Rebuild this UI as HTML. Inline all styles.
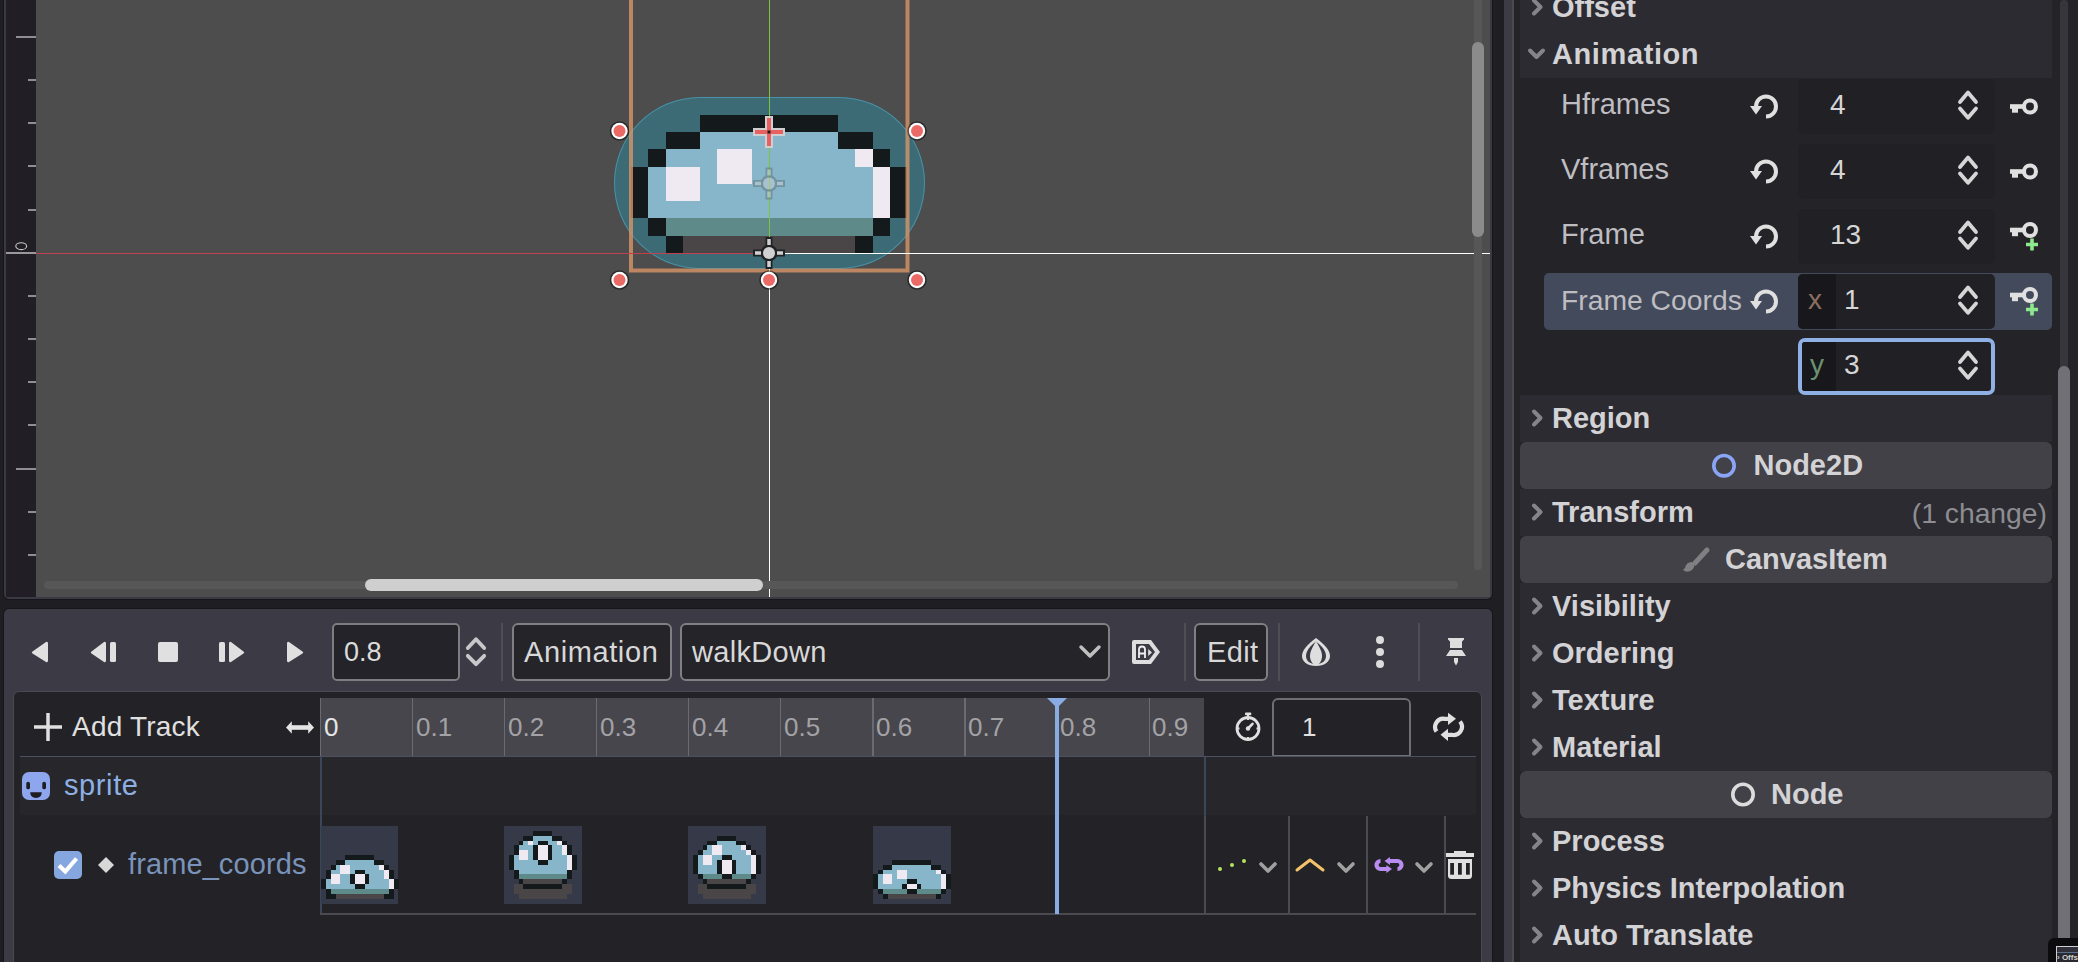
<!DOCTYPE html>
<html><head><meta charset="utf-8">
<style>
html,body{margin:0;padding:0;}
body{width:2078px;height:962px;overflow:hidden;position:relative;background:#1f1e23;font-family:"Liberation Sans",sans-serif;}
.a{position:absolute;}
.t{position:absolute;white-space:nowrap;line-height:1;}
svg{position:absolute;overflow:visible;}
</style></head><body>

<div class="a" style="left:4px;top:-10px;width:1488px;height:609px;background:#3a3944;border-radius:0 0 5px 5px;box-shadow:0 0 0 1px #17161b;"></div>
<div class="a" style="left:6px;top:0px;width:30px;height:597px;background:#211f25;"></div>
<div class="a" style="left:36px;top:0px;width:1454px;height:597px;background:#4d4d4d;"></div>
<div class="a" style="left:16px;top:36px;width:20px;height:2px;background:#8f8e93;"></div>
<div class="a" style="left:28px;top:79px;width:8px;height:2px;background:#8f8e93;"></div>
<div class="a" style="left:28px;top:122px;width:8px;height:2px;background:#8f8e93;"></div>
<div class="a" style="left:28px;top:165px;width:8px;height:2px;background:#8f8e93;"></div>
<div class="a" style="left:28px;top:209px;width:8px;height:2px;background:#8f8e93;"></div>
<div class="a" style="left:6px;top:252px;width:30px;height:2px;background:#99989d;"></div>
<div class="a" style="left:28px;top:295px;width:8px;height:2px;background:#8f8e93;"></div>
<div class="a" style="left:28px;top:338px;width:8px;height:2px;background:#8f8e93;"></div>
<div class="a" style="left:28px;top:381px;width:8px;height:2px;background:#8f8e93;"></div>
<div class="a" style="left:28px;top:424px;width:8px;height:2px;background:#8f8e93;"></div>
<div class="a" style="left:16px;top:468px;width:20px;height:2px;background:#8f8e93;"></div>
<div class="a" style="left:28px;top:511px;width:8px;height:2px;background:#8f8e93;"></div>
<div class="a" style="left:28px;top:554px;width:8px;height:2px;background:#8f8e93;"></div>
<svg style="left:15px;top:242px" width="13" height="9"><ellipse cx="6.2" cy="4.2" rx="5.4" ry="3.4" fill="none" stroke="#c8c8c8" stroke-width="1.1"/></svg>
<div class="a" style="left:613.5px;top:97px;width:311px;height:172px;background:#3d6b75;border-radius:86px;box-shadow:0 0 0 1px rgba(80,170,200,0.6) inset;"></div>
<svg style="left:630.5px;top:-6.5px" width="276" height="276" viewBox="0 0 16 16" shape-rendering="crispEdges"><rect x="4" y="7" width="8" height="1" fill="#141a1b"/><rect x="2" y="8" width="2" height="1" fill="#141a1b"/><rect x="4" y="8" width="8" height="1" fill="#87b5c9"/><rect x="12" y="8" width="2" height="1" fill="#141a1b"/><rect x="1" y="9" width="1" height="1" fill="#141a1b"/><rect x="2" y="9" width="3" height="1" fill="#87b5c9"/><rect x="5" y="9" width="2" height="1" fill="#efe9f1"/><rect x="7" y="9" width="6" height="1" fill="#87b5c9"/><rect x="13" y="9" width="1" height="1" fill="#efe9f1"/><rect x="14" y="9" width="1" height="1" fill="#141a1b"/><rect x="0" y="10" width="1" height="1" fill="#141a1b"/><rect x="1" y="10" width="1" height="1" fill="#87b5c9"/><rect x="2" y="10" width="2" height="1" fill="#efe9f1"/><rect x="4" y="10" width="1" height="1" fill="#87b5c9"/><rect x="5" y="10" width="2" height="1" fill="#efe9f1"/><rect x="7" y="10" width="7" height="1" fill="#87b5c9"/><rect x="14" y="10" width="1" height="1" fill="#efe9f1"/><rect x="15" y="10" width="1" height="1" fill="#141a1b"/><rect x="0" y="11" width="1" height="1" fill="#141a1b"/><rect x="1" y="11" width="1" height="1" fill="#87b5c9"/><rect x="2" y="11" width="2" height="1" fill="#efe9f1"/><rect x="4" y="11" width="10" height="1" fill="#87b5c9"/><rect x="14" y="11" width="1" height="1" fill="#efe9f1"/><rect x="15" y="11" width="1" height="1" fill="#141a1b"/><rect x="0" y="12" width="1" height="1" fill="#141a1b"/><rect x="1" y="12" width="13" height="1" fill="#87b5c9"/><rect x="14" y="12" width="1" height="1" fill="#efe9f1"/><rect x="15" y="12" width="1" height="1" fill="#141a1b"/><rect x="1" y="13" width="1" height="1" fill="#141a1b"/><rect x="2" y="13" width="12" height="1" fill="#5f8a8a"/><rect x="14" y="13" width="1" height="1" fill="#141a1b"/><rect x="2" y="14" width="1" height="1" fill="#141a1b"/><rect x="3" y="14" width="10" height="1" fill="#4a4547"/><rect x="13" y="14" width="1" height="1" fill="#141a1b"/></svg>
<svg style="left:0;top:0" width="1490" height="597"><path d="M631 -5 V270.5 H907.5 V-5" fill="none" stroke="rgba(220,150,104,0.78)" stroke-width="4"/></svg>
<div class="a" style="left:36px;top:253px;width:733px;height:1px;background:#c0404f;"></div>
<div class="a" style="left:769px;top:253px;width:721px;height:1px;background:#ffffff;"></div>
<div class="a" style="left:769px;top:0px;width:1px;height:253px;background:#7cc43f;"></div>
<div class="a" style="left:769px;top:253px;width:1px;height:344px;background:#ffffff;"></div>
<svg style="left:0;top:0" width="1490" height="597">
<g stroke="#cfcfcf" stroke-width="8" stroke-linecap="butt"><line x1="769" y1="116" x2="769" y2="148"/><line x1="753" y1="132" x2="785" y2="132"/></g>
<g stroke="#e8605f" stroke-width="4"><line x1="769" y1="118" x2="769" y2="146"/><line x1="755" y1="132" x2="783" y2="132"/></g>
<rect x="767.5" y="130.5" width="3" height="3" fill="#1a1a1a"/>
</svg>
<svg style="left:0;top:0" width="1490" height="597"><g opacity="0.45"><g stroke="#5a6a70" stroke-width="7"><line x1="769" y1="167.5" x2="769" y2="199.5"/><line x1="753" y1="183.5" x2="785" y2="183.5"/></g>
<circle cx="769" cy="183.5" r="8.5" fill="#5a6a70"/>
<g stroke="#d0d0d0" stroke-width="3.5"><line x1="769" y1="169.5" x2="769" y2="175.5"/><line x1="769" y1="191.5" x2="769" y2="197.5"/><line x1="755" y1="183.5" x2="761" y2="183.5"/><line x1="777" y1="183.5" x2="783" y2="183.5"/></g>
<circle cx="769" cy="183.5" r="6" fill="#d0d0d0"/></g><g opacity="1"><g stroke="#202325" stroke-width="7"><line x1="769" y1="237" x2="769" y2="269"/><line x1="753" y1="253" x2="785" y2="253"/></g>
<circle cx="769" cy="253" r="8.5" fill="#202325"/>
<g stroke="#d0d0d0" stroke-width="3.5"><line x1="769" y1="239" x2="769" y2="245"/><line x1="769" y1="261" x2="769" y2="267"/><line x1="755" y1="253" x2="761" y2="253"/><line x1="777" y1="253" x2="783" y2="253"/></g>
<circle cx="769" cy="253" r="6" fill="#d0d0d0"/></g></svg>
<svg style="left:0;top:0" width="1490" height="597"><circle cx="619.5" cy="131" r="9.8" fill="rgba(0,0,0,0.45)"/><circle cx="619.5" cy="131" r="8.2" fill="#ffffff"/><circle cx="619.5" cy="131" r="6" fill="#ec6a66"/><circle cx="917" cy="131" r="9.8" fill="rgba(0,0,0,0.45)"/><circle cx="917" cy="131" r="8.2" fill="#ffffff"/><circle cx="917" cy="131" r="6" fill="#ec6a66"/><circle cx="619.5" cy="280" r="9.8" fill="rgba(0,0,0,0.45)"/><circle cx="619.5" cy="280" r="8.2" fill="#ffffff"/><circle cx="619.5" cy="280" r="6" fill="#ec6a66"/><circle cx="769" cy="280" r="9.8" fill="rgba(0,0,0,0.45)"/><circle cx="769" cy="280" r="8.2" fill="#ffffff"/><circle cx="769" cy="280" r="6" fill="#ec6a66"/><circle cx="917" cy="280" r="9.8" fill="rgba(0,0,0,0.45)"/><circle cx="917" cy="280" r="8.2" fill="#ffffff"/><circle cx="917" cy="280" r="6" fill="#ec6a66"/></svg>
<div class="a" style="left:1474px;top:0px;width:8px;height:570px;background:#575757;border-radius:0 0 4px 4px;"></div>
<div class="a" style="left:1472px;top:42px;width:12px;height:195px;background:#8b8b8b;border-radius:6px;"></div>
<div class="a" style="left:44px;top:581px;width:1414px;height:8px;background:#575757;border-radius:4px;"></div>
<div class="a" style="left:365px;top:579px;width:398px;height:12px;background:#cfcfcf;border-radius:6px;"></div>
<div class="a" style="left:4px;top:609px;width:1488px;height:400px;background:#3c3a44;border-radius:5px 5px 0 0;box-shadow:0 0 0 1px #17161b;"></div>
<svg style="left:0;top:0" width="1500" height="962">
<path d="M48 643.5 L48 660.5 Q48 663 46 662 L32.5 653.5 Q31 652.5 32.5 651.5 L46 642 Q48 641 48 643.5Z" fill="#e0e0e0"/>
<path d="M106 643.5 L106 660.5 Q106 663 104 662 L91.5 653.5 Q90 652.5 91.5 651.5 L104 642 Q106 641 106 643.5Z" fill="#e0e0e0"/>
<rect x="110" y="642" width="6" height="20" rx="1.5" fill="#e0e0e0"/>
<rect x="158" y="642" width="20" height="20" rx="2" fill="#e0e0e0"/>
<rect x="219" y="642" width="6" height="20" rx="1.5" fill="#e0e0e0"/>
<path d="M229 643.5 L229 660.5 Q229 663 231 662 L243.5 653.5 Q245 652.5 243.5 651.5 L231 642 Q229 641 229 643.5Z" fill="#e0e0e0"/>
<path d="M287 643.5 L287 660.5 Q287 663 289 662 L302.5 653.5 Q304 652.5 302.5 651.5 L289 642 Q287 641 287 643.5Z" fill="#e0e0e0"/>
<path d="M467.8 648 L476 639.2 L484.2 648 M467.8 655.8 L476 664.2 L484.2 655.8" fill="none" stroke="#c8c8cb" stroke-width="3.8" stroke-linecap="round" stroke-linejoin="round"/>
</svg>
<div class="a" style="left:332px;top:623px;width:128px;height:58px;background:#242329;border:2px solid #7d7c80;border-radius:5px;box-sizing:border-box;"></div>
<div class="t" style="left:344px;top:638.8275px;font-size:27px;color:#dcdcdc;font-weight:normal;">0.8</div>
<div class="a" style="left:501px;top:623px;width:2px;height:58px;background:#4f4e57;"></div>
<div class="a" style="left:1184px;top:623px;width:2px;height:58px;background:#4f4e57;"></div>
<div class="a" style="left:1278px;top:623px;width:2px;height:58px;background:#4f4e57;"></div>
<div class="a" style="left:1418px;top:623px;width:2px;height:58px;background:#4f4e57;"></div>
<div class="a" style="left:512px;top:623px;width:160px;height:58px;background:#252429;border:2px solid #807f84;border-radius:6px;box-sizing:border-box;"></div>
<div class="t" style="left:524px;top:638.4515px;font-size:29px;color:#d8d8d8;font-weight:normal;letter-spacing:0.6px;">Animation</div>
<div class="a" style="left:680px;top:623px;width:430px;height:58px;background:#252429;border:2px solid #807f84;border-radius:6px;box-sizing:border-box;"></div>
<div class="t" style="left:692px;top:638.4515px;font-size:29px;color:#d8d8d8;font-weight:normal;letter-spacing:0.3px;">walkDown</div>
<svg style="left:0;top:0" width="1500" height="962">
<path d="M1081 647 L1090 656 L1099 647" fill="none" stroke="#c0c0c0" stroke-width="3.5" stroke-linecap="round" stroke-linejoin="round"/>
<path fill-rule="evenodd" d="M1134 640 H1151 L1160 652 L1151 664 H1134 Q1132 664 1132 662 V642 Q1132 640 1134 640Z M1136 644 V660 H1149 L1155 652 L1149 644Z" fill="#dedede"/>
<path d="M1139 658 V649.5 A3 3 0 0 1 1145 649.5 V658 M1139 653.5 H1145" fill="none" stroke="#f0f0f0" stroke-width="1.8"/>
<path d="M1148.2 649 L1152 652.5 L1148.2 656Z" fill="#dedede"/>
</svg>
<div class="a" style="left:1194px;top:623px;width:74px;height:58px;background:#252429;border:2px solid #807f84;border-radius:6px;box-sizing:border-box;"></div>
<div class="t" style="left:1207px;top:637.9515px;font-size:29px;color:#d8d8d8;font-weight:normal;letter-spacing:0.4px;">Edit</div>
<svg style="left:0;top:0" width="1500" height="962">
<path d="M1316 638 C1308 644 1302 650 1302 656 C1302 662 1308 666 1316 666 C1324 666 1330 662 1330 656 C1330 650 1324 644 1316 638Z" fill="#dedede"/>
<path d="M1316 641.5 C1310 646 1306 651 1306 656 C1306 661 1310 664 1316 664 C1322 664 1326 661 1326 656 C1326 651 1322 646 1316 641.5Z" fill="#3c3a44"/>
<path d="M1316 641 C1312 648 1310 652 1310 656 C1310 661 1313 665 1316 665 C1319 665 1322 661 1322 656 C1322 652 1320 648 1316 641Z" fill="#dedede"/>
<circle cx="1380" cy="640" r="4" fill="#dcdcdc"/><circle cx="1380" cy="652" r="4" fill="#dcdcdc"/><circle cx="1380" cy="664" r="4" fill="#dcdcdc"/>
<path d="M1448 638 H1464 V639.5 L1462 641.5 V648 H1450 V641.5 L1448 639.5Z" fill="#dedede"/>
<path d="M1450 650 H1462 L1466 656 H1446Z" fill="#dedede"/>
<path d="M1454 658 H1458 V662 L1456 665.5 L1454 662Z" fill="#dedede"/>
</svg>
<div class="a" style="left:13px;top:691px;width:1469px;height:300px;background:#232227;border:1px solid #4a4951;border-radius:6px;box-sizing:border-box;"></div>
<div class="a" style="left:320px;top:698px;width:884px;height:58px;background:#47464c;"></div>
<div class="a" style="left:319.6px;top:698px;width:1.4px;height:58px;background:#6b6a70;"></div>
<div class="t" style="left:324px;top:713.991px;font-size:26px;color:#e6e6e6;font-weight:normal;">0</div>
<div class="a" style="left:411.7px;top:698px;width:1.4px;height:58px;background:#6b6a70;"></div>
<div class="t" style="left:416px;top:713.991px;font-size:26px;color:#a3a2a6;font-weight:normal;">0.1</div>
<div class="a" style="left:503.8px;top:698px;width:1.4px;height:58px;background:#6b6a70;"></div>
<div class="t" style="left:508px;top:713.991px;font-size:26px;color:#a3a2a6;font-weight:normal;">0.2</div>
<div class="a" style="left:595.9px;top:698px;width:1.4px;height:58px;background:#6b6a70;"></div>
<div class="t" style="left:600px;top:713.991px;font-size:26px;color:#a3a2a6;font-weight:normal;">0.3</div>
<div class="a" style="left:688.0px;top:698px;width:1.4px;height:58px;background:#6b6a70;"></div>
<div class="t" style="left:692px;top:713.991px;font-size:26px;color:#a3a2a6;font-weight:normal;">0.4</div>
<div class="a" style="left:780.1px;top:698px;width:1.4px;height:58px;background:#6b6a70;"></div>
<div class="t" style="left:784px;top:713.991px;font-size:26px;color:#a3a2a6;font-weight:normal;">0.5</div>
<div class="a" style="left:872.2px;top:698px;width:1.4px;height:58px;background:#6b6a70;"></div>
<div class="t" style="left:876px;top:713.991px;font-size:26px;color:#a3a2a6;font-weight:normal;">0.6</div>
<div class="a" style="left:964.3px;top:698px;width:1.4px;height:58px;background:#6b6a70;"></div>
<div class="t" style="left:968px;top:713.991px;font-size:26px;color:#a3a2a6;font-weight:normal;">0.7</div>
<div class="a" style="left:1056.4px;top:698px;width:1.4px;height:58px;background:#6b6a70;"></div>
<div class="t" style="left:1060px;top:713.991px;font-size:26px;color:#a3a2a6;font-weight:normal;">0.8</div>
<div class="a" style="left:1148.5px;top:698px;width:1.4px;height:58px;background:#6b6a70;"></div>
<div class="t" style="left:1152px;top:713.991px;font-size:26px;color:#a3a2a6;font-weight:normal;">0.9</div>
<svg style="left:0;top:0" width="1500" height="962">
<path d="M48 713 V741 M34 727 H62" stroke="#e0e0e0" stroke-width="3.5"/>
<rect x="291" y="725.2" width="18" height="4.6" fill="#e4e4e4"/><path d="M286 727.5 L291.8 721.2 V733.8Z M314 727.5 L308.2 721.2 V733.8Z" fill="#e4e4e4"/>
</svg>
<div class="t" style="left:72px;top:713.298px;font-size:28px;color:#e0e0e0;font-weight:normal;letter-spacing:0.2px;">Add Track</div>
<svg style="left:0;top:0" width="1500" height="962">
<circle cx="1248" cy="728.5" r="11" fill="none" stroke="#e0e0e0" stroke-width="2.8"/>
<rect x="1245" y="712.5" width="6.3" height="2.8" rx="1" fill="#e0e0e0"/><rect x="1247" y="714" width="2" height="4" fill="#e0e0e0"/>
<path d="M1248 717.5 V720 M1248 737 V739.5 M1237 728.5 H1239.5 M1256.5 728.5 H1259" stroke="#e0e0e0" stroke-width="2"/>
<path d="M1248 728.5 L1252.5 723.8" stroke="#e0e0e0" stroke-width="2.6" stroke-linecap="round"/><circle cx="1248" cy="728.5" r="2.2" fill="#e0e0e0"/>
<path d="M1436.5 731.5 A8.2 8.2 0 0 1 1444.5 718.8 H1449" fill="none" stroke="#e0e0e0" stroke-width="4.2"/>
<path d="M1448 712.8 L1456 718.8 L1448 725Z" fill="#e0e0e0"/>
<path d="M1460 721.5 A8.2 8.2 0 0 1 1452 734.8 H1447" fill="none" stroke="#e0e0e0" stroke-width="4.2"/>
<path d="M1448 728.8 L1440.5 734.8 L1448 741Z" fill="#e0e0e0"/>
</svg>
<div class="a" style="left:1272px;top:698px;width:139px;height:59px;background:#232227;border:2px solid #6f6e73;border-radius:6px 6px 2px 2px;box-sizing:border-box;"></div>
<div class="t" style="left:1302px;top:713.991px;font-size:26px;color:#e0e0e0;font-weight:normal;">1</div>
<div class="a" style="left:20px;top:756px;width:1456px;height:1.5px;background:#4b5163;"></div>
<div class="a" style="left:20px;top:757px;width:1456px;height:58px;background:#27262b;"></div>
<svg style="left:0;top:0" width="1500" height="962">
<rect x="22" y="772" width="28" height="28" rx="7" fill="#8ea6ee"/>
<rect x="26.3" y="781.8" width="3.7" height="7.5" rx="1.85" fill="#1e1d22"/><rect x="42.3" y="781.8" width="3.7" height="7.5" rx="1.85" fill="#1e1d22"/>
<path d="M30.2 792.3 H41.8 Q41.5 798 36 798 Q30.5 798 30.2 792.3Z" fill="#1e1d22"/>
</svg>
<div class="t" style="left:64px;top:770.9515px;font-size:29px;color:#8db0e3;font-weight:normal;letter-spacing:0.6px;">sprite</div>
<div class="a" style="left:320px;top:757px;width:1.5px;height:157px;background:#3a465a;"></div>
<svg style="left:0;top:0" width="1500" height="962">
<rect x="54" y="851" width="28" height="28" rx="5" fill="#86a6e0"/>
<path d="M59 865.5 L65.3 871.5 L76.5 858.5" fill="none" stroke="#ffffff" stroke-width="4.2" stroke-linejoin="miter"/>
<path d="M106 857 L114 865 L106 873 L98 865Z" fill="#d8d8d8"/>
</svg>
<div class="t" style="left:128px;top:850.4515px;font-size:29px;color:#7a93ba;font-weight:normal;letter-spacing:0.1px;">frame_coords</div>
<div class="a" style="left:320.5px;top:826px;width:77.5px;height:78px;background:#363a48;"></div>
<svg style="left:320.5px;top:826px;filter:blur(0.45px)" width="77.5" height="77.5" viewBox="0 0 16 16" shape-rendering="crispEdges"><rect x="5" y="6" width="6" height="1" fill="#141a1b"/><rect x="3" y="7" width="2" height="1" fill="#141a1b"/><rect x="5" y="7" width="6" height="1" fill="#87b5c9"/><rect x="11" y="7" width="2" height="1" fill="#141a1b"/><rect x="2" y="8" width="1" height="1" fill="#141a1b"/><rect x="3" y="8" width="1" height="1" fill="#87b5c9"/><rect x="4" y="8" width="2" height="1" fill="#efe9f1"/><rect x="6" y="8" width="6" height="1" fill="#87b5c9"/><rect x="12" y="8" width="1" height="1" fill="#efe9f1"/><rect x="13" y="8" width="1" height="1" fill="#141a1b"/><rect x="1" y="9" width="1" height="1" fill="#141a1b"/><rect x="2" y="9" width="2" height="1" fill="#87b5c9"/><rect x="4" y="9" width="2" height="1" fill="#efe9f1"/><rect x="6" y="9" width="1" height="1" fill="#87b5c9"/><rect x="7" y="9" width="2" height="1" fill="#141a1b"/><rect x="9" y="9" width="4" height="1" fill="#87b5c9"/><rect x="13" y="9" width="1" height="1" fill="#efe9f1"/><rect x="14" y="9" width="1" height="1" fill="#141a1b"/><rect x="1" y="10" width="1" height="1" fill="#141a1b"/><rect x="2" y="10" width="2" height="1" fill="#efe9f1"/><rect x="4" y="10" width="2" height="1" fill="#87b5c9"/><rect x="6" y="10" width="1" height="1" fill="#141a1b"/><rect x="7" y="10" width="2" height="1" fill="#efe9f1"/><rect x="9" y="10" width="1" height="1" fill="#141a1b"/><rect x="10" y="10" width="3" height="1" fill="#87b5c9"/><rect x="13" y="10" width="1" height="1" fill="#efe9f1"/><rect x="14" y="10" width="1" height="1" fill="#141a1b"/><rect x="0" y="11" width="1" height="1" fill="#141a1b"/><rect x="1" y="11" width="1" height="1" fill="#87b5c9"/><rect x="2" y="11" width="2" height="1" fill="#efe9f1"/><rect x="4" y="11" width="2" height="1" fill="#87b5c9"/><rect x="6" y="11" width="1" height="1" fill="#141a1b"/><rect x="7" y="11" width="2" height="1" fill="#efe9f1"/><rect x="9" y="11" width="1" height="1" fill="#141a1b"/><rect x="10" y="11" width="4" height="1" fill="#87b5c9"/><rect x="14" y="11" width="1" height="1" fill="#efe9f1"/><rect x="15" y="11" width="1" height="1" fill="#141a1b"/><rect x="0" y="12" width="1" height="1" fill="#141a1b"/><rect x="1" y="12" width="6" height="1" fill="#87b5c9"/><rect x="7" y="12" width="2" height="1" fill="#141a1b"/><rect x="9" y="12" width="5" height="1" fill="#87b5c9"/><rect x="14" y="12" width="1" height="1" fill="#efe9f1"/><rect x="15" y="12" width="1" height="1" fill="#141a1b"/><rect x="1" y="13" width="1" height="1" fill="#141a1b"/><rect x="2" y="13" width="12" height="1" fill="#5f8a8a"/><rect x="14" y="13" width="1" height="1" fill="#141a1b"/><rect x="1" y="14" width="2" height="1" fill="#141a1b"/><rect x="3" y="14" width="10" height="1" fill="#4a4547"/><rect x="13" y="14" width="2" height="1" fill="#141a1b"/></svg>
<div class="a" style="left:504px;top:826px;width:77.5px;height:78px;background:#363a48;"></div>
<svg style="left:504px;top:826px;filter:blur(0.45px)" width="77.5" height="77.5" viewBox="0 0 16 16" shape-rendering="crispEdges"><rect x="6" y="1" width="4" height="1" fill="#141a1b"/><rect x="4" y="2" width="2" height="1" fill="#141a1b"/><rect x="6" y="2" width="4" height="1" fill="#87b5c9"/><rect x="10" y="2" width="2" height="1" fill="#141a1b"/><rect x="3" y="3" width="1" height="1" fill="#141a1b"/><rect x="4" y="3" width="1" height="1" fill="#87b5c9"/><rect x="5" y="3" width="1" height="1" fill="#efe9f1"/><rect x="6" y="3" width="1" height="1" fill="#87b5c9"/><rect x="7" y="3" width="2" height="1" fill="#141a1b"/><rect x="9" y="3" width="2" height="1" fill="#87b5c9"/><rect x="11" y="3" width="1" height="1" fill="#efe9f1"/><rect x="12" y="3" width="1" height="1" fill="#141a1b"/><rect x="2" y="4" width="1" height="1" fill="#141a1b"/><rect x="3" y="4" width="3" height="1" fill="#87b5c9"/><rect x="6" y="4" width="1" height="1" fill="#141a1b"/><rect x="7" y="4" width="2" height="1" fill="#efe9f1"/><rect x="9" y="4" width="1" height="1" fill="#141a1b"/><rect x="10" y="4" width="2" height="1" fill="#87b5c9"/><rect x="12" y="4" width="1" height="1" fill="#efe9f1"/><rect x="13" y="4" width="1" height="1" fill="#141a1b"/><rect x="2" y="5" width="1" height="1" fill="#141a1b"/><rect x="3" y="5" width="2" height="1" fill="#efe9f1"/><rect x="5" y="5" width="1" height="1" fill="#87b5c9"/><rect x="6" y="5" width="1" height="1" fill="#141a1b"/><rect x="7" y="5" width="2" height="1" fill="#efe9f1"/><rect x="9" y="5" width="1" height="1" fill="#141a1b"/><rect x="10" y="5" width="2" height="1" fill="#87b5c9"/><rect x="12" y="5" width="1" height="1" fill="#efe9f1"/><rect x="13" y="5" width="1" height="1" fill="#141a1b"/><rect x="1" y="6" width="1" height="1" fill="#141a1b"/><rect x="2" y="6" width="1" height="1" fill="#87b5c9"/><rect x="3" y="6" width="2" height="1" fill="#efe9f1"/><rect x="5" y="6" width="1" height="1" fill="#87b5c9"/><rect x="6" y="6" width="1" height="1" fill="#141a1b"/><rect x="7" y="6" width="2" height="1" fill="#efe9f1"/><rect x="9" y="6" width="1" height="1" fill="#141a1b"/><rect x="10" y="6" width="3" height="1" fill="#87b5c9"/><rect x="13" y="6" width="1" height="1" fill="#efe9f1"/><rect x="14" y="6" width="1" height="1" fill="#141a1b"/><rect x="1" y="7" width="1" height="1" fill="#141a1b"/><rect x="2" y="7" width="5" height="1" fill="#87b5c9"/><rect x="7" y="7" width="2" height="1" fill="#141a1b"/><rect x="9" y="7" width="4" height="1" fill="#87b5c9"/><rect x="13" y="7" width="1" height="1" fill="#efe9f1"/><rect x="14" y="7" width="1" height="1" fill="#141a1b"/><rect x="1" y="8" width="1" height="1" fill="#141a1b"/><rect x="2" y="8" width="11" height="1" fill="#87b5c9"/><rect x="13" y="8" width="1" height="1" fill="#efe9f1"/><rect x="14" y="8" width="1" height="1" fill="#141a1b"/><rect x="2" y="9" width="1" height="1" fill="#141a1b"/><rect x="3" y="9" width="10" height="1" fill="#87b5c9"/><rect x="13" y="9" width="1" height="1" fill="#141a1b"/><rect x="2" y="10" width="1" height="1" fill="#141a1b"/><rect x="3" y="10" width="10" height="1" fill="#5f8a8a"/><rect x="13" y="10" width="1" height="1" fill="#141a1b"/><rect x="3" y="11" width="1" height="1" fill="#141a1b"/><rect x="4" y="11" width="8" height="1" fill="#4a4547"/><rect x="12" y="11" width="1" height="1" fill="#141a1b"/><rect x="2" y="12" width="2" height="1" fill="#4a4547"/><rect x="4" y="12" width="8" height="1" fill="#141a1b"/><rect x="12" y="12" width="2" height="1" fill="#4a4547"/><rect x="2" y="13" width="12" height="1" fill="#4a4547"/><rect x="3" y="14" width="10" height="1" fill="#4a4547"/></svg>
<div class="a" style="left:688px;top:826px;width:77.5px;height:78px;background:#363a48;"></div>
<svg style="left:688px;top:826px;filter:blur(0.45px)" width="77.5" height="77.5" viewBox="0 0 16 16" shape-rendering="crispEdges"><rect x="6" y="2" width="4" height="1" fill="#141a1b"/><rect x="4" y="3" width="2" height="1" fill="#141a1b"/><rect x="6" y="3" width="4" height="1" fill="#87b5c9"/><rect x="10" y="3" width="2" height="1" fill="#141a1b"/><rect x="3" y="4" width="1" height="1" fill="#141a1b"/><rect x="4" y="4" width="1" height="1" fill="#87b5c9"/><rect x="5" y="4" width="2" height="1" fill="#efe9f1"/><rect x="7" y="4" width="4" height="1" fill="#87b5c9"/><rect x="11" y="4" width="1" height="1" fill="#efe9f1"/><rect x="12" y="4" width="1" height="1" fill="#141a1b"/><rect x="2" y="5" width="1" height="1" fill="#141a1b"/><rect x="3" y="5" width="2" height="1" fill="#87b5c9"/><rect x="5" y="5" width="2" height="1" fill="#efe9f1"/><rect x="7" y="5" width="5" height="1" fill="#87b5c9"/><rect x="12" y="5" width="1" height="1" fill="#efe9f1"/><rect x="13" y="5" width="1" height="1" fill="#141a1b"/><rect x="1" y="6" width="1" height="1" fill="#141a1b"/><rect x="2" y="6" width="1" height="1" fill="#87b5c9"/><rect x="3" y="6" width="2" height="1" fill="#efe9f1"/><rect x="5" y="6" width="2" height="1" fill="#87b5c9"/><rect x="7" y="6" width="2" height="1" fill="#141a1b"/><rect x="9" y="6" width="4" height="1" fill="#87b5c9"/><rect x="13" y="6" width="1" height="1" fill="#efe9f1"/><rect x="14" y="6" width="1" height="1" fill="#141a1b"/><rect x="1" y="7" width="1" height="1" fill="#141a1b"/><rect x="2" y="7" width="1" height="1" fill="#87b5c9"/><rect x="3" y="7" width="2" height="1" fill="#efe9f1"/><rect x="5" y="7" width="1" height="1" fill="#87b5c9"/><rect x="6" y="7" width="1" height="1" fill="#141a1b"/><rect x="7" y="7" width="2" height="1" fill="#efe9f1"/><rect x="9" y="7" width="1" height="1" fill="#141a1b"/><rect x="10" y="7" width="3" height="1" fill="#87b5c9"/><rect x="13" y="7" width="1" height="1" fill="#efe9f1"/><rect x="14" y="7" width="1" height="1" fill="#141a1b"/><rect x="1" y="8" width="1" height="1" fill="#141a1b"/><rect x="2" y="8" width="4" height="1" fill="#87b5c9"/><rect x="6" y="8" width="1" height="1" fill="#141a1b"/><rect x="7" y="8" width="2" height="1" fill="#efe9f1"/><rect x="9" y="8" width="1" height="1" fill="#141a1b"/><rect x="10" y="8" width="3" height="1" fill="#87b5c9"/><rect x="13" y="8" width="1" height="1" fill="#efe9f1"/><rect x="14" y="8" width="1" height="1" fill="#141a1b"/><rect x="1" y="9" width="1" height="1" fill="#141a1b"/><rect x="2" y="9" width="4" height="1" fill="#87b5c9"/><rect x="6" y="9" width="1" height="1" fill="#141a1b"/><rect x="7" y="9" width="2" height="1" fill="#efe9f1"/><rect x="9" y="9" width="1" height="1" fill="#141a1b"/><rect x="10" y="9" width="3" height="1" fill="#87b5c9"/><rect x="13" y="9" width="1" height="1" fill="#efe9f1"/><rect x="14" y="9" width="1" height="1" fill="#141a1b"/><rect x="2" y="10" width="1" height="1" fill="#141a1b"/><rect x="3" y="10" width="4" height="1" fill="#5f8a8a"/><rect x="7" y="10" width="2" height="1" fill="#141a1b"/><rect x="9" y="10" width="4" height="1" fill="#5f8a8a"/><rect x="13" y="10" width="1" height="1" fill="#141a1b"/><rect x="3" y="11" width="1" height="1" fill="#141a1b"/><rect x="4" y="11" width="8" height="1" fill="#4a4547"/><rect x="12" y="11" width="1" height="1" fill="#141a1b"/><rect x="2" y="12" width="2" height="1" fill="#4a4547"/><rect x="4" y="12" width="8" height="1" fill="#141a1b"/><rect x="12" y="12" width="2" height="1" fill="#4a4547"/><rect x="2" y="13" width="12" height="1" fill="#4a4547"/><rect x="3" y="14" width="10" height="1" fill="#4a4547"/></svg>
<div class="a" style="left:873px;top:826px;width:77.5px;height:78px;background:#363a48;"></div>
<svg style="left:873px;top:826px;filter:blur(0.45px)" width="77.5" height="77.5" viewBox="0 0 16 16" shape-rendering="crispEdges"><rect x="4" y="7" width="8" height="1" fill="#141a1b"/><rect x="2" y="8" width="2" height="1" fill="#141a1b"/><rect x="4" y="8" width="8" height="1" fill="#87b5c9"/><rect x="12" y="8" width="2" height="1" fill="#141a1b"/><rect x="1" y="9" width="1" height="1" fill="#141a1b"/><rect x="2" y="9" width="3" height="1" fill="#87b5c9"/><rect x="5" y="9" width="2" height="1" fill="#efe9f1"/><rect x="7" y="9" width="6" height="1" fill="#87b5c9"/><rect x="13" y="9" width="1" height="1" fill="#efe9f1"/><rect x="14" y="9" width="1" height="1" fill="#141a1b"/><rect x="0" y="10" width="1" height="1" fill="#141a1b"/><rect x="1" y="10" width="1" height="1" fill="#87b5c9"/><rect x="2" y="10" width="2" height="1" fill="#efe9f1"/><rect x="4" y="10" width="1" height="1" fill="#87b5c9"/><rect x="5" y="10" width="2" height="1" fill="#efe9f1"/><rect x="7" y="10" width="7" height="1" fill="#87b5c9"/><rect x="14" y="10" width="1" height="1" fill="#efe9f1"/><rect x="15" y="10" width="1" height="1" fill="#141a1b"/><rect x="0" y="11" width="1" height="1" fill="#141a1b"/><rect x="1" y="11" width="1" height="1" fill="#87b5c9"/><rect x="2" y="11" width="2" height="1" fill="#efe9f1"/><rect x="4" y="11" width="3" height="1" fill="#87b5c9"/><rect x="7" y="11" width="2" height="1" fill="#141a1b"/><rect x="9" y="11" width="5" height="1" fill="#87b5c9"/><rect x="14" y="11" width="1" height="1" fill="#efe9f1"/><rect x="15" y="11" width="1" height="1" fill="#141a1b"/><rect x="0" y="12" width="1" height="1" fill="#141a1b"/><rect x="1" y="12" width="5" height="1" fill="#87b5c9"/><rect x="6" y="12" width="1" height="1" fill="#141a1b"/><rect x="7" y="12" width="2" height="1" fill="#efe9f1"/><rect x="9" y="12" width="1" height="1" fill="#141a1b"/><rect x="10" y="12" width="4" height="1" fill="#87b5c9"/><rect x="14" y="12" width="1" height="1" fill="#efe9f1"/><rect x="15" y="12" width="1" height="1" fill="#141a1b"/><rect x="1" y="13" width="1" height="1" fill="#141a1b"/><rect x="2" y="13" width="5" height="1" fill="#5f8a8a"/><rect x="7" y="13" width="2" height="1" fill="#141a1b"/><rect x="9" y="13" width="5" height="1" fill="#5f8a8a"/><rect x="14" y="13" width="1" height="1" fill="#141a1b"/><rect x="2" y="14" width="1" height="1" fill="#141a1b"/><rect x="3" y="14" width="10" height="1" fill="#4a4547"/><rect x="13" y="14" width="1" height="1" fill="#141a1b"/></svg>
<div class="a" style="left:1204px;top:757px;width:1.5px;height:59px;background:#3a465a;"></div>
<div class="a" style="left:1204px;top:816px;width:2px;height:98px;background:#4b4a50;"></div>
<div class="a" style="left:1288px;top:816px;width:2px;height:98px;background:#4b4a50;"></div>
<div class="a" style="left:1366px;top:816px;width:2px;height:98px;background:#4b4a50;"></div>
<div class="a" style="left:1444px;top:816px;width:2px;height:98px;background:#4b4a50;"></div>
<div class="a" style="left:320px;top:913px;width:1156px;height:2px;background:#4b4a50;"></div>
<div class="a" style="left:1055px;top:698px;width:4px;height:216px;background:#89ace3;"></div>
<svg style="left:0;top:0" width="1500" height="962"><path d="M1047 698 H1067 L1057 708Z" fill="#89ace3"/></svg>
<svg style="left:0;top:0" width="1500" height="962">
<circle cx="1220" cy="869" r="2" fill="#b6e35a"/><circle cx="1232" cy="865" r="2" fill="#b6e35a"/><circle cx="1244" cy="861" r="2" fill="#b6e35a"/>
<path d="M1261 864 L1268 871 L1275 864" fill="none" stroke="#a0a0a0" stroke-width="3.6" stroke-linecap="round" stroke-linejoin="round"/>
<path d="M1297 870 L1310 860 L1323 870" fill="none" stroke="#f4c26a" stroke-width="3" stroke-linecap="round" stroke-linejoin="round"/>
<path d="M1339 864 L1346 871 L1353 864" fill="none" stroke="#a0a0a0" stroke-width="3.6" stroke-linecap="round" stroke-linejoin="round"/>
<path d="M1380.5 861 A4 4 0 0 0 1380.5 869 H1387.5" fill="none" stroke="#b98cf0" stroke-width="4.2"/>
<path d="M1386.4 865 L1392 869 L1386.4 873Z" fill="#b98cf0"/>
<path d="M1397.5 869 A4 4 0 0 0 1397.5 861 H1389" fill="none" stroke="#b98cf0" stroke-width="4.2"/>
<path d="M1390 857 L1384.5 861 L1390 865Z" fill="#b98cf0"/>
<path d="M1417 864 L1424 871 L1431 864" fill="none" stroke="#a0a0a0" stroke-width="3.6" stroke-linecap="round" stroke-linejoin="round"/>
<rect x="1446" y="853" width="28" height="4" fill="#e0e0e0"/><rect x="1454" y="851" width="12" height="3" fill="#e0e0e0"/>
<path d="M1448 859 H1472 V875.5 Q1472 879 1468.5 879 H1451.5 Q1448 879 1448 875.5Z" fill="#e0e0e0"/>
<rect x="1450.2" y="863" width="3.8" height="11.7" fill="#232227"/><rect x="1458" y="863" width="3.8" height="11.7" fill="#232227"/><rect x="1466" y="863" width="3.8" height="11.7" fill="#232227"/>
</svg>
<div class="a" style="left:1504px;top:0px;width:8px;height:962px;background:#3c3b46;"></div>
<div class="a" style="left:1512px;top:0px;width:2px;height:962px;background:#4b4b4b;"></div>
<div class="a" style="left:1514px;top:0px;width:564px;height:962px;background:#242328;"></div>
<div class="a" style="left:1520px;top:-16px;width:532px;height:47px;background:#2c2b31;"></div>
<svg style="left:0;top:0" width="2078" height="962"><path d="M1534 0.5 L1540.5 7 L1534 13.5" fill="none" stroke="#85848a" stroke-width="4" stroke-linecap="round" stroke-linejoin="round"/></svg>
<div class="t" style="left:1552px;top:-6.548500000000001px;font-size:29px;color:#d3d2d5;font-weight:bold;letter-spacing:0px;">Offset</div>
<div class="a" style="left:1520px;top:31px;width:532px;height:47px;background:#2c2b31;"></div>
<svg style="left:0;top:0" width="2078" height="962"><path d="M1530 50.5 L1536.5 57 L1543 50.5" fill="none" stroke="#85848a" stroke-width="4" stroke-linecap="round" stroke-linejoin="round"/></svg>
<div class="t" style="left:1552px;top:40.451499999999996px;font-size:29px;color:#d3d2d5;font-weight:bold;letter-spacing:0.6px;">Animation</div>
<div class="a" style="left:1544px;top:273px;width:508px;height:57px;background:#434a5c;border-radius:5px;"></div>
<div class="a" style="left:1798px;top:79px;width:197px;height:55px;background:#212025;border-radius:5px;"></div>
<div class="t" style="left:1561px;top:90.4515px;font-size:29px;color:#bebdc1;font-weight:normal;">Hframes</div>
<div class="t" style="left:1830px;top:91.298px;font-size:28px;color:#d6d6d6;font-weight:normal;">4</div>
<div class="a" style="left:1798px;top:144px;width:197px;height:55px;background:#212025;border-radius:5px;"></div>
<div class="t" style="left:1561px;top:155.4515px;font-size:29px;color:#bebdc1;font-weight:normal;">Vframes</div>
<div class="t" style="left:1830px;top:156.298px;font-size:28px;color:#d6d6d6;font-weight:normal;">4</div>
<div class="a" style="left:1798px;top:209px;width:197px;height:55px;background:#212025;border-radius:5px;"></div>
<div class="t" style="left:1561px;top:220.4515px;font-size:29px;color:#bebdc1;font-weight:normal;">Frame</div>
<div class="t" style="left:1830px;top:221.298px;font-size:28px;color:#d6d6d6;font-weight:normal;">13</div>
<div class="a" style="left:1798px;top:274px;width:197px;height:55px;background:#212025;border-radius:5px;"></div>
<div class="a" style="left:1798px;top:274px;width:38px;height:55px;background:#18171b;border-radius:5px 0 0 5px;"></div>
<div class="a" style="left:1995px;top:274px;width:57px;height:55px;background:#434a5c;border-radius:0 5px 5px 0;"></div>
<div class="t" style="left:1561px;top:286.04404999999997px;font-size:28.3px;color:#bebdc1;font-weight:normal;">Frame Coords</div>
<div class="t" style="left:1808px;top:286.298px;font-size:28px;color:#8a6e62;font-weight:normal;">x</div>
<div class="t" style="left:1844px;top:286.298px;font-size:28px;color:#d6d6d6;font-weight:normal;">1</div>
<div class="a" style="left:1798px;top:338px;width:197px;height:57px;background:#212025;border:4px solid #8eb0e4;border-radius:7px;box-sizing:border-box;"></div>
<div class="a" style="left:1802px;top:342px;width:34px;height:49px;background:#18171b;border-radius:3px 0 0 3px;"></div>
<div class="t" style="left:1810px;top:351.298px;font-size:28px;color:#6a9270;font-weight:normal;">y</div>
<div class="t" style="left:1844px;top:351.298px;font-size:28px;color:#d6d6d6;font-weight:normal;">3</div>
<svg style="left:0;top:0" width="2078" height="962"><path d="M1766 116.5 A10 10 0 1 0 1756 106.5" fill="none" stroke="#e0e0e0" stroke-width="4"/><path d="M1750 106 L1762 106 L1756 114.5Z" fill="#e0e0e0"/><path d="M1960 102 L1968 92.5 L1976 102 M1960 108.5 L1968 117.7 L1976 108.5" fill="none" stroke="#d6d6d6" stroke-width="3.8" stroke-linecap="round" stroke-linejoin="round"/><circle cx="2030" cy="106.5" r="6" fill="none" stroke="#e0e0e0" stroke-width="4"/><rect x="2010" y="104.2" width="15" height="4.6" fill="#e0e0e0"/><rect x="2012" y="106.5" width="6" height="6.2" fill="#e0e0e0"/><path d="M1766 181.5 A10 10 0 1 0 1756 171.5" fill="none" stroke="#e0e0e0" stroke-width="4"/><path d="M1750 171 L1762 171 L1756 179.5Z" fill="#e0e0e0"/><path d="M1960 167 L1968 157.5 L1976 167 M1960 173.5 L1968 182.7 L1976 173.5" fill="none" stroke="#d6d6d6" stroke-width="3.8" stroke-linecap="round" stroke-linejoin="round"/><circle cx="2030" cy="171.5" r="6" fill="none" stroke="#e0e0e0" stroke-width="4"/><rect x="2010" y="169.2" width="15" height="4.6" fill="#e0e0e0"/><rect x="2012" y="171.5" width="6" height="6.2" fill="#e0e0e0"/><path d="M1766 246.5 A10 10 0 1 0 1756 236.5" fill="none" stroke="#e0e0e0" stroke-width="4"/><path d="M1750 236 L1762 236 L1756 244.5Z" fill="#e0e0e0"/><path d="M1960 232 L1968 222.5 L1976 232 M1960 238.5 L1968 247.7 L1976 238.5" fill="none" stroke="#d6d6d6" stroke-width="3.8" stroke-linecap="round" stroke-linejoin="round"/><circle cx="2030" cy="230" r="6" fill="none" stroke="#e0e0e0" stroke-width="4"/><rect x="2010" y="227.7" width="15" height="4.6" fill="#e0e0e0"/><rect x="2012" y="230" width="6" height="6.2" fill="#e0e0e0"/><path d="M2032 238.5 V250.5 M2026 244.5 H2038" stroke="#8ee88e" stroke-width="3.6"/><path d="M1766 311.5 A10 10 0 1 0 1756 301.5" fill="none" stroke="#e0e0e0" stroke-width="4"/><path d="M1750 301 L1762 301 L1756 309.5Z" fill="#e0e0e0"/><path d="M1960 297 L1968 287.5 L1976 297 M1960 303.5 L1968 312.7 L1976 303.5" fill="none" stroke="#d6d6d6" stroke-width="3.8" stroke-linecap="round" stroke-linejoin="round"/><circle cx="2030" cy="295" r="6" fill="none" stroke="#e0e0e0" stroke-width="4"/><rect x="2010" y="292.7" width="15" height="4.6" fill="#e0e0e0"/><rect x="2012" y="295" width="6" height="6.2" fill="#e0e0e0"/><path d="M2032 303.5 V315.5 M2026 309.5 H2038" stroke="#8ee88e" stroke-width="3.6"/><path d="M1960 362 L1968 352.5 L1976 362 M1960 368.5 L1968 377.7 L1976 368.5" fill="none" stroke="#d6d6d6" stroke-width="3.8" stroke-linecap="round" stroke-linejoin="round"/></svg>
<div class="a" style="left:1520px;top:395px;width:532px;height:47px;background:#2c2b31;"></div>
<svg style="left:0;top:0" width="2078" height="962"><path d="M1534 411.5 L1540.5 418 L1534 424.5" fill="none" stroke="#85848a" stroke-width="4" stroke-linecap="round" stroke-linejoin="round"/></svg>
<div class="t" style="left:1552px;top:404.4515px;font-size:29px;color:#d3d2d5;font-weight:bold;letter-spacing:0px;">Region</div>
<div class="a" style="left:1520px;top:442px;width:532px;height:47px;background:#424147;border-radius:6px;"></div>
<svg style="left:0;top:0" width="2078" height="962"><circle cx="1724" cy="465.7" r="10.2" fill="none" stroke="#8aa5f5" stroke-width="3.6"/></svg>
<div class="t" style="left:1753.5px;top:451.4515px;font-size:29px;color:#d3d2d5;font-weight:bold;">Node2D</div>
<div class="a" style="left:1520px;top:489px;width:532px;height:47px;background:#2c2b31;"></div>
<svg style="left:0;top:0" width="2078" height="962"><path d="M1534 505.5 L1540.5 512 L1534 518.5" fill="none" stroke="#85848a" stroke-width="4" stroke-linecap="round" stroke-linejoin="round"/></svg>
<div class="t" style="left:1552px;top:498.4515px;font-size:29px;color:#d3d2d5;font-weight:bold;letter-spacing:0px;">Transform</div>
<div class="t" style="right:31px;top:499.04404999999997px;font-size:28.3px;color:#8e8d92;">(1 change)</div>
<div class="a" style="left:1520px;top:536px;width:532px;height:47px;background:#424147;border-radius:6px;"></div>
<svg style="left:0;top:0" width="2078" height="962"><path d="M1707 550 L1695 563" stroke="#808083" stroke-width="5" stroke-linecap="round"/><path d="M1692 562 Q1686 562 1685 568 L1683 570 Q1688 574 1693 569 Q1696 565 1692 562Z" fill="#808083"/></svg>
<div class="t" style="left:1725px;top:545.4515px;font-size:29px;color:#d3d2d5;font-weight:bold;">CanvasItem</div>
<div class="a" style="left:1520px;top:583px;width:532px;height:47px;background:#2c2b31;"></div>
<svg style="left:0;top:0" width="2078" height="962"><path d="M1534 599.5 L1540.5 606 L1534 612.5" fill="none" stroke="#85848a" stroke-width="4" stroke-linecap="round" stroke-linejoin="round"/></svg>
<div class="t" style="left:1552px;top:592.4515px;font-size:29px;color:#d3d2d5;font-weight:bold;letter-spacing:0px;">Visibility</div>
<div class="a" style="left:1520px;top:630px;width:532px;height:47px;background:#2c2b31;"></div>
<svg style="left:0;top:0" width="2078" height="962"><path d="M1534 646.5 L1540.5 653 L1534 659.5" fill="none" stroke="#85848a" stroke-width="4" stroke-linecap="round" stroke-linejoin="round"/></svg>
<div class="t" style="left:1552px;top:639.4515px;font-size:29px;color:#d3d2d5;font-weight:bold;letter-spacing:0px;">Ordering</div>
<div class="a" style="left:1520px;top:677px;width:532px;height:47px;background:#2c2b31;"></div>
<svg style="left:0;top:0" width="2078" height="962"><path d="M1534 693.5 L1540.5 700 L1534 706.5" fill="none" stroke="#85848a" stroke-width="4" stroke-linecap="round" stroke-linejoin="round"/></svg>
<div class="t" style="left:1552px;top:686.4515px;font-size:29px;color:#d3d2d5;font-weight:bold;letter-spacing:0px;">Texture</div>
<div class="a" style="left:1520px;top:724px;width:532px;height:47px;background:#2c2b31;"></div>
<svg style="left:0;top:0" width="2078" height="962"><path d="M1534 740.5 L1540.5 747 L1534 753.5" fill="none" stroke="#85848a" stroke-width="4" stroke-linecap="round" stroke-linejoin="round"/></svg>
<div class="t" style="left:1552px;top:733.4515px;font-size:29px;color:#d3d2d5;font-weight:bold;letter-spacing:0px;">Material</div>
<div class="a" style="left:1520px;top:771px;width:532px;height:47px;background:#424147;border-radius:6px;"></div>
<svg style="left:0;top:0" width="2078" height="962"><circle cx="1743" cy="794.5" r="10.2" fill="none" stroke="#dcdcdc" stroke-width="3.6"/></svg>
<div class="t" style="left:1771px;top:780.4515px;font-size:29px;color:#d3d2d5;font-weight:bold;">Node</div>
<div class="a" style="left:1520px;top:959px;width:532px;height:5px;background:#2c2b31;"></div>
<div class="a" style="left:1520px;top:818px;width:532px;height:47px;background:#2c2b31;"></div>
<svg style="left:0;top:0" width="2078" height="962"><path d="M1534 834.5 L1540.5 841 L1534 847.5" fill="none" stroke="#85848a" stroke-width="4" stroke-linecap="round" stroke-linejoin="round"/></svg>
<div class="t" style="left:1552px;top:827.4515px;font-size:29px;color:#d3d2d5;font-weight:bold;letter-spacing:0px;">Process</div>
<div class="a" style="left:1520px;top:865px;width:532px;height:47px;background:#2c2b31;"></div>
<svg style="left:0;top:0" width="2078" height="962"><path d="M1534 881.5 L1540.5 888 L1534 894.5" fill="none" stroke="#85848a" stroke-width="4" stroke-linecap="round" stroke-linejoin="round"/></svg>
<div class="t" style="left:1552px;top:874.4515px;font-size:29px;color:#d3d2d5;font-weight:bold;letter-spacing:0px;">Physics Interpolation</div>
<div class="a" style="left:1520px;top:912px;width:532px;height:47px;background:#2c2b31;"></div>
<svg style="left:0;top:0" width="2078" height="962"><path d="M1534 928.5 L1540.5 935 L1534 941.5" fill="none" stroke="#85848a" stroke-width="4" stroke-linecap="round" stroke-linejoin="round"/></svg>
<div class="t" style="left:1552px;top:921.4515px;font-size:29px;color:#d3d2d5;font-weight:bold;letter-spacing:0px;">Auto Translate</div>
<div class="a" style="left:2060px;top:0px;width:8px;height:962px;background:#37363c;border-radius:4px;"></div>
<div class="a" style="left:2058px;top:366px;width:12px;height:600px;background:#717076;border-radius:6px;"></div>
<div class="a" style="left:2048px;top:938px;width:40px;height:40px;background:#0c0c0e;border-radius:6px;"></div>
<div class="a" style="left:2056px;top:946px;width:30px;height:20px;background:#2a2a30;border:1px solid #d0d0d0;box-sizing:border-box;"></div>
<div class="a" style="left:2057px;top:952px;width:22px;height:1.2px;background:#5a7090;"></div>
<div class="a" style="left:2057px;top:947px;width:22px;height:5px;background:#30303a;"></div>
<div class="t" style="left:2057px;top:953.5px;font-size:8px;color:#d0d0d0;font-weight:bold;">&#8250; Offs</div>
</body></html>
